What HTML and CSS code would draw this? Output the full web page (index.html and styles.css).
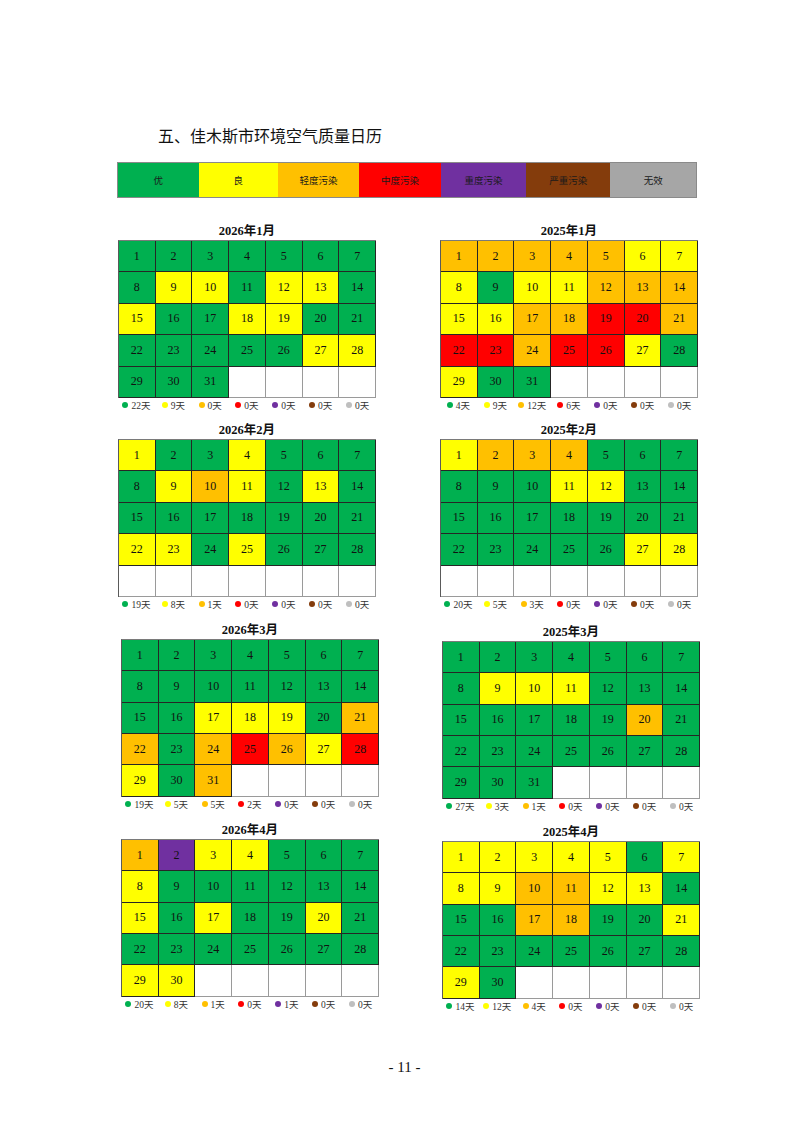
FILE: index.html
```html
<!DOCTYPE html>
<html lang="zh-CN">
<head>
<meta charset="utf-8">
<title>佳木斯市环境空气质量日历</title>
<link rel="stylesheet" href="styles.css">
</head>
<body>
<div class="page">
  <h1 class="title">五、佳木斯市环境空气质量日历</h1>

  <div class="legend-bar">
    <div class="seg s1 g">优</div>
    <div class="seg s2 y">良</div>
    <div class="seg s3 o">轻度污染</div>
    <div class="seg s4 r">中度污染</div>
    <div class="seg s5 p">重度污染</div>
    <div class="seg s6 b">严重污染</div>
    <div class="seg s7 n">无效</div>
  </div>

  <div class="cal-row">
    <section class="cal">
      <h2 class="cal-title">2026年1月</h2>
      <div class="grid">
        <span class="g">1</span><span class="g">2</span><span class="g">3</span><span class="g">4</span><span class="g">5</span><span class="g">6</span><span class="g">7</span>
        <span class="g">8</span><span class="y">9</span><span class="y">10</span><span class="g">11</span><span class="y">12</span><span class="y">13</span><span class="g">14</span>
        <span class="y">15</span><span class="g">16</span><span class="g">17</span><span class="y">18</span><span class="y">19</span><span class="g">20</span><span class="g">21</span>
        <span class="g">22</span><span class="g">23</span><span class="g">24</span><span class="g">25</span><span class="g">26</span><span class="y">27</span><span class="y">28</span>
        <span class="g">29</span><span class="g">30</span><span class="g">31</span><span class="e"></span><span class="e"></span><span class="e"></span><span class="e"></span>
      </div>
      <div class="stats">
        <div class="st"><i class="dot g"></i>22天</div>
        <div class="st"><i class="dot y"></i>9天</div>
        <div class="st"><i class="dot o"></i>0天</div>
        <div class="st"><i class="dot r"></i>0天</div>
        <div class="st"><i class="dot p"></i>0天</div>
        <div class="st"><i class="dot b"></i>0天</div>
        <div class="st"><i class="dot n"></i>0天</div>
      </div>
    </section>
    <section class="cal">
      <h2 class="cal-title">2025年1月</h2>
      <div class="grid">
        <span class="o">1</span><span class="o">2</span><span class="o">3</span><span class="o">4</span><span class="o">5</span><span class="y">6</span><span class="y">7</span>
        <span class="y">8</span><span class="g">9</span><span class="y">10</span><span class="y">11</span><span class="o">12</span><span class="o">13</span><span class="o">14</span>
        <span class="y">15</span><span class="y">16</span><span class="o">17</span><span class="o">18</span><span class="r">19</span><span class="r">20</span><span class="o">21</span>
        <span class="r">22</span><span class="r">23</span><span class="o">24</span><span class="r">25</span><span class="r">26</span><span class="y">27</span><span class="g">28</span>
        <span class="y">29</span><span class="g">30</span><span class="g">31</span><span class="e"></span><span class="e"></span><span class="e"></span><span class="e"></span>
      </div>
      <div class="stats">
        <div class="st"><i class="dot g"></i>4天</div>
        <div class="st"><i class="dot y"></i>9天</div>
        <div class="st"><i class="dot o"></i>12天</div>
        <div class="st"><i class="dot r"></i>6天</div>
        <div class="st"><i class="dot p"></i>0天</div>
        <div class="st"><i class="dot b"></i>0天</div>
        <div class="st"><i class="dot n"></i>0天</div>
      </div>
    </section>
  </div>

  <div class="cal-row">
    <section class="cal">
      <h2 class="cal-title">2026年2月</h2>
      <div class="grid">
        <span class="y">1</span><span class="g">2</span><span class="g">3</span><span class="y">4</span><span class="g">5</span><span class="g">6</span><span class="g">7</span>
        <span class="g">8</span><span class="y">9</span><span class="o">10</span><span class="y">11</span><span class="g">12</span><span class="y">13</span><span class="g">14</span>
        <span class="g">15</span><span class="g">16</span><span class="g">17</span><span class="g">18</span><span class="g">19</span><span class="g">20</span><span class="g">21</span>
        <span class="y">22</span><span class="y">23</span><span class="g">24</span><span class="y">25</span><span class="g">26</span><span class="g">27</span><span class="g">28</span>
        <span class="e"></span><span class="e"></span><span class="e"></span><span class="e"></span><span class="e"></span><span class="e"></span><span class="e"></span>
      </div>
      <div class="stats">
        <div class="st"><i class="dot g"></i>19天</div>
        <div class="st"><i class="dot y"></i>8天</div>
        <div class="st"><i class="dot o"></i>1天</div>
        <div class="st"><i class="dot r"></i>0天</div>
        <div class="st"><i class="dot p"></i>0天</div>
        <div class="st"><i class="dot b"></i>0天</div>
        <div class="st"><i class="dot n"></i>0天</div>
      </div>
    </section>
    <section class="cal">
      <h2 class="cal-title">2025年2月</h2>
      <div class="grid">
        <span class="y">1</span><span class="o">2</span><span class="o">3</span><span class="o">4</span><span class="g">5</span><span class="g">6</span><span class="g">7</span>
        <span class="g">8</span><span class="g">9</span><span class="g">10</span><span class="y">11</span><span class="y">12</span><span class="g">13</span><span class="g">14</span>
        <span class="g">15</span><span class="g">16</span><span class="g">17</span><span class="g">18</span><span class="g">19</span><span class="g">20</span><span class="g">21</span>
        <span class="g">22</span><span class="g">23</span><span class="g">24</span><span class="g">25</span><span class="g">26</span><span class="y">27</span><span class="y">28</span>
        <span class="e"></span><span class="e"></span><span class="e"></span><span class="e"></span><span class="e"></span><span class="e"></span><span class="e"></span>
      </div>
      <div class="stats">
        <div class="st"><i class="dot g"></i>20天</div>
        <div class="st"><i class="dot y"></i>5天</div>
        <div class="st"><i class="dot o"></i>3天</div>
        <div class="st"><i class="dot r"></i>0天</div>
        <div class="st"><i class="dot p"></i>0天</div>
        <div class="st"><i class="dot b"></i>0天</div>
        <div class="st"><i class="dot n"></i>0天</div>
      </div>
    </section>
  </div>

  <div class="cal-row shifted">
    <section class="cal">
      <h2 class="cal-title">2026年3月</h2>
      <div class="grid">
        <span class="g">1</span><span class="g">2</span><span class="g">3</span><span class="g">4</span><span class="g">5</span><span class="g">6</span><span class="g">7</span>
        <span class="g">8</span><span class="g">9</span><span class="g">10</span><span class="g">11</span><span class="g">12</span><span class="g">13</span><span class="g">14</span>
        <span class="g">15</span><span class="g">16</span><span class="y">17</span><span class="y">18</span><span class="y">19</span><span class="g">20</span><span class="o">21</span>
        <span class="o">22</span><span class="g">23</span><span class="o">24</span><span class="r">25</span><span class="o">26</span><span class="y">27</span><span class="r">28</span>
        <span class="y">29</span><span class="g">30</span><span class="o">31</span><span class="e"></span><span class="e"></span><span class="e"></span><span class="e"></span>
      </div>
      <div class="stats">
        <div class="st"><i class="dot g"></i>19天</div>
        <div class="st"><i class="dot y"></i>5天</div>
        <div class="st"><i class="dot o"></i>5天</div>
        <div class="st"><i class="dot r"></i>2天</div>
        <div class="st"><i class="dot p"></i>0天</div>
        <div class="st"><i class="dot b"></i>0天</div>
        <div class="st"><i class="dot n"></i>0天</div>
      </div>
    </section>
    <section class="cal low">
      <h2 class="cal-title">2025年3月</h2>
      <div class="grid">
        <span class="g">1</span><span class="g">2</span><span class="g">3</span><span class="g">4</span><span class="g">5</span><span class="g">6</span><span class="g">7</span>
        <span class="g">8</span><span class="y">9</span><span class="y">10</span><span class="y">11</span><span class="g">12</span><span class="g">13</span><span class="g">14</span>
        <span class="g">15</span><span class="g">16</span><span class="g">17</span><span class="g">18</span><span class="g">19</span><span class="o">20</span><span class="g">21</span>
        <span class="g">22</span><span class="g">23</span><span class="g">24</span><span class="g">25</span><span class="g">26</span><span class="g">27</span><span class="g">28</span>
        <span class="g">29</span><span class="g">30</span><span class="g">31</span><span class="e"></span><span class="e"></span><span class="e"></span><span class="e"></span>
      </div>
      <div class="stats">
        <div class="st"><i class="dot g"></i>27天</div>
        <div class="st"><i class="dot y"></i>3天</div>
        <div class="st"><i class="dot o"></i>1天</div>
        <div class="st"><i class="dot r"></i>0天</div>
        <div class="st"><i class="dot p"></i>0天</div>
        <div class="st"><i class="dot b"></i>0天</div>
        <div class="st"><i class="dot n"></i>0天</div>
      </div>
    </section>
  </div>

  <div class="cal-row shifted">
    <section class="cal">
      <h2 class="cal-title">2026年4月</h2>
      <div class="grid">
        <span class="o">1</span><span class="p">2</span><span class="y">3</span><span class="y">4</span><span class="g">5</span><span class="g">6</span><span class="g">7</span>
        <span class="y">8</span><span class="g">9</span><span class="g">10</span><span class="g">11</span><span class="g">12</span><span class="g">13</span><span class="g">14</span>
        <span class="y">15</span><span class="g">16</span><span class="y">17</span><span class="g">18</span><span class="g">19</span><span class="y">20</span><span class="g">21</span>
        <span class="g">22</span><span class="g">23</span><span class="g">24</span><span class="g">25</span><span class="g">26</span><span class="g">27</span><span class="g">28</span>
        <span class="y">29</span><span class="y">30</span><span class="e"></span><span class="e"></span><span class="e"></span><span class="e"></span><span class="e"></span>
      </div>
      <div class="stats">
        <div class="st"><i class="dot g"></i>20天</div>
        <div class="st"><i class="dot y"></i>8天</div>
        <div class="st"><i class="dot o"></i>1天</div>
        <div class="st"><i class="dot r"></i>0天</div>
        <div class="st"><i class="dot p"></i>1天</div>
        <div class="st"><i class="dot b"></i>0天</div>
        <div class="st"><i class="dot n"></i>0天</div>
      </div>
    </section>
    <section class="cal low">
      <h2 class="cal-title">2025年4月</h2>
      <div class="grid">
        <span class="y">1</span><span class="y">2</span><span class="y">3</span><span class="y">4</span><span class="y">5</span><span class="g">6</span><span class="y">7</span>
        <span class="y">8</span><span class="y">9</span><span class="o">10</span><span class="o">11</span><span class="y">12</span><span class="y">13</span><span class="g">14</span>
        <span class="g">15</span><span class="g">16</span><span class="o">17</span><span class="o">18</span><span class="g">19</span><span class="g">20</span><span class="y">21</span>
        <span class="g">22</span><span class="g">23</span><span class="g">24</span><span class="g">25</span><span class="g">26</span><span class="g">27</span><span class="g">28</span>
        <span class="y">29</span><span class="g">30</span><span class="e"></span><span class="e"></span><span class="e"></span><span class="e"></span><span class="e"></span>
      </div>
      <div class="stats">
        <div class="st"><i class="dot g"></i>14天</div>
        <div class="st"><i class="dot y"></i>12天</div>
        <div class="st"><i class="dot o"></i>4天</div>
        <div class="st"><i class="dot r"></i>0天</div>
        <div class="st"><i class="dot p"></i>0天</div>
        <div class="st"><i class="dot b"></i>0天</div>
        <div class="st"><i class="dot n"></i>0天</div>
      </div>
    </section>
  </div>

  <div class="page-num">- 11 -</div>
</div>
</body>
</html>
```

FILE: styles.css
```css
* { box-sizing: border-box; }

body {
  margin: 0;
  background: #ffffff;
  font-family: "Liberation Serif", "Noto Sans CJK SC", serif;
  color: #111111;
}

.page {
  width: 793px;
  height: 1122px;
  padding-top: 124px;
}

.title {
  margin: 0 0 0 158px;
  font-family: "Noto Sans CJK SC", sans-serif;
  font-size: 16px;
  font-weight: 400;
  line-height: 22px;
  color: #111111;
}

.legend-bar {
  display: flex;
  width: 580px;
  height: 36px;
  margin: 16px 0 0 117px;
  border: 1.5px solid #8a8a8a;
}

.seg {
  display: flex;
  align-items: center;
  justify-content: center;
  font-family: "Noto Sans CJK SC", serif;
  font-size: 9.5px;
  color: #1a1a1a;
}
.s1 { flex: 81; }
.s2 { flex: 80; }
.s3 { flex: 81; }
.s4 { flex: 83; }
.s5 { flex: 85; }
.s6 { flex: 85; }
.s7 { flex: 86; }

.g { background: #00b050; }
.y { background: #ffff00; }
.o { background: #ffc000; }
.r { background: #ff0000; }
.p { background: #7030a0; }
.b { background: #843c0c; }
.n { background: #a6a6a6; }

.cal-row {
  display: flex;
  gap: 64px;
  padding-left: 118px;
  margin-top: 25px;
}
.cal-row + .cal-row { margin-top: 12px; }
.cal-row.shifted {
  padding-left: 121px;
  gap: 63px;
  margin-top: 13px;
}
.cal-row.shifted + .cal-row.shifted { margin-top: 11px; }

.cal { width: 258px; }
.cal.low { padding-top: 2px; }

.cal-title {
  margin: 0;
  text-align: center;
  font-family: "Liberation Serif", "Noto Sans CJK SC", serif;
  font-size: 12.5px;
  font-weight: bold;
  line-height: 17px;
  color: #111111;
}

.grid {
  display: grid;
  grid-template-columns: repeat(7, 1fr);
  grid-template-rows: repeat(5, 31.4px);
  border-top: 1.5px solid #7a7a7a;
  border-left: 1px solid #5a5a5a;
}

.grid > span {
  display: flex;
  align-items: center;
  justify-content: center;
  font-size: 12px;
  color: #111111;
  border-right: 1px solid #262626;
  border-bottom: 1px solid #262626;
}
.grid > span.e {
  background: #ffffff;
  border-right-color: #9a9a9a;
  border-bottom-color: #9a9a9a;
}

.stats {
  display: grid;
  grid-template-columns: repeat(7, 1fr);
  height: 12px;
  align-items: center;
  font-size: 9.5px;
  color: #333333;
}

.st {
  display: flex;
  align-items: center;
  justify-content: center;
  gap: 3px;
  white-space: nowrap;
}

.dot {
  width: 6px;
  height: 6px;
  border-radius: 50%;
  display: inline-block;
}
.dot.n { background: #bfbfbf; }

.page-num {
  margin-top: 48px;
  text-align: center;
  padding-left: 16px;
  font-size: 15px;
  color: #111111;
}
```
